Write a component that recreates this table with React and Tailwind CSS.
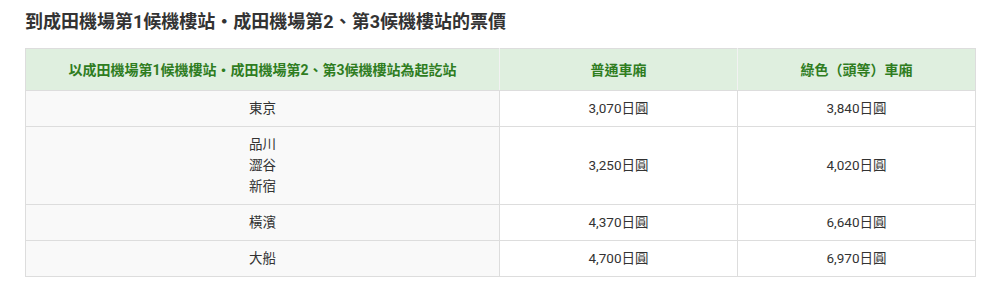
import React from "react";

const rows = [
  { stations: ["東京"], normal: "3,070日圓", green: "3,840日圓" },
  { stations: ["品川", "澀谷", "新宿"], normal: "3,250日圓", green: "4,020日圓" },
  { stations: ["橫濱"], normal: "4,370日圓", green: "6,640日圓" },
  { stations: ["大船"], normal: "4,700日圓", green: "6,970日圓" },
];

const App = () => {
  return (
    <div
      className="w-[993px] h-[290px] bg-white px-[25px] pt-[8px] text-[#333]"
      style={{ fontFamily: 'Roboto, "Noto Sans CJK TC", sans-serif' }}
    >
      <h2 className="text-[18px] font-bold leading-[28px] text-[#333] mb-[12px]">
        到成田機場第1候機樓站・成田機場第2、第3候機樓站的票價
      </h2>

      <table className="w-[950px] border-collapse table-fixed text-[13.5px]">
        <colgroup>
          <col className="w-[474px]" />
          <col className="w-[238px]" />
          <col className="w-[238px]" />
        </colgroup>
        <thead>
          <tr className="bg-[#dfefdf] text-[#2f7d1f] text-[14px] font-bold">
            <th className="h-[42px] border border-[#dddddd] border-r-[#f2f2f2] leading-[20px] text-center">
              以成田機場第1候機樓站・成田機場第2、第3候機樓站為起訖站
            </th>
            <th className="h-[42px] border border-[#dddddd] border-r-[#f2f2f2] leading-[20px] text-center">
              普通車廂
            </th>
            <th className="h-[42px] border border-[#dddddd] leading-[20px] text-center">
              綠色（頭等）車廂
            </th>
          </tr>
        </thead>
        <tbody>
          {rows.map((row, idx) => (
            <tr key={idx}>
              <td className="bg-[#f9f9f9] border border-[#dddddd] py-[7px] leading-[21px] text-center align-middle">
                {row.stations.map((s) => (
                  <div key={s}>{s}</div>
                ))}
              </td>
              <td className="bg-white border border-[#dddddd] py-[7px] leading-[21px] text-center align-middle">
                {row.normal}
              </td>
              <td className="bg-white border border-[#dddddd] py-[7px] leading-[21px] text-center align-middle">
                {row.green}
              </td>
            </tr>
          ))}
        </tbody>
      </table>
    </div>
  );
};

export default App;
